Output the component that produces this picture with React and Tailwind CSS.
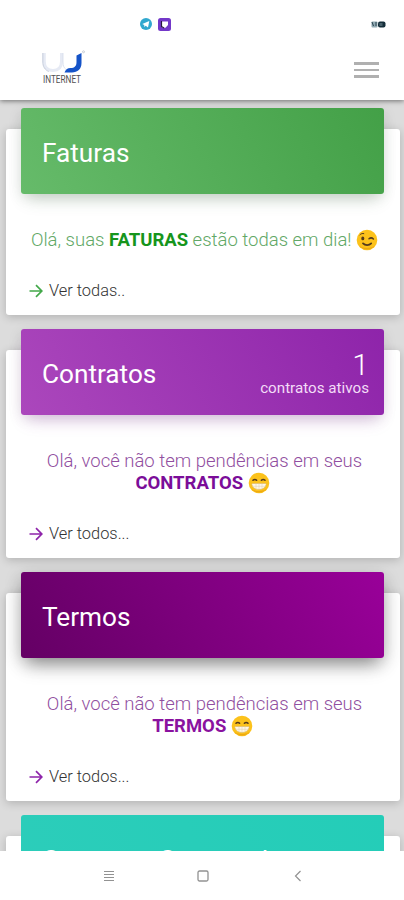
import React from 'react';

const cards = [
    {
        title: 'Faturas',
        titleSpacing: 'pt-[4px]',
        header: 'bg-[linear-gradient(60deg,#66bb6a,#43a047)] shadow-[0_10px_16px_-6px_rgba(60,110,65,0.25),0_3px_14px_rgba(0,0,0,0.1)]',
        text: 'text-[#62a866]',
        strong: 'text-[#16951c]',
        arrow: 'text-[#43a84a]',
        size: 'h-[186px]',
        message: 'Olá, suas ',
        keyword: 'FATURAS',
        after: ' estão todas em dia!',
        emoji: 'wink',
        link: 'Ver todas..',
    },
    {
        title: 'Contratos',
        titleSpacing: 'pt-[4px]',
        count: '1',
        countLabel: 'contratos ativos',
        header: 'bg-[linear-gradient(60deg,#ab47bc,#8e24aa)] shadow-[0_10px_16px_-6px_rgba(140,50,165,0.28),0_3px_14px_rgba(0,0,0,0.1)]',
        text: 'text-[#914fa0]',
        strong: 'text-[#7b0d99]',
        arrow: 'text-[#8e24aa]',
        size: 'h-[208px]',
        message: 'Olá, você não tem pendências em seus',
        keyword: 'CONTRATOS',
        breakLine: true,
        emoji: 'grin',
        link: 'Ver todos...',
    },
    {
        title: 'Termos',
        titleSpacing: 'pt-[4px]',
        header: 'bg-[linear-gradient(60deg,#640064,#990099)] shadow-[0_10px_18px_-5px_rgba(0,0,0,0.42),0_4px_18px_rgba(0,0,0,0.16)]',
        text: 'text-[#914fa0]',
        strong: 'text-[#8a129f]',
        arrow: 'text-[#8e24aa]',
        size: 'h-[208px]',
        message: 'Olá, você não tem pendências em seus',
        keyword: 'TERMOS',
        breakLine: true,
        emoji: 'grin',
        link: 'Ver todos...',
    },
    {
        title: 'Consumo Conectado',
        titleSpacing: 'pt-[4px] tracking-[-0.3px]',
        header: 'bg-[linear-gradient(60deg,#2ccdba,#24cdb8)]',
        size: 'h-[186px]',
    },
];

const Emoji = ({ type }) => (
    <svg className={`inline-block w-[22px] h-[22px] -my-[2px] align-[-3px] ${type === 'grin' ? 'mr-[4px]' : ''}`} viewBox="0 0 22 22">
        <circle cx="11" cy="11" r="10.3" fill="#fcc21b" />
        <path d="M2.5 16a10.3 10.3 0 0 0 17 0c-4 4-13 4-17 0Z" fill="#eda912" />
        {type === 'wink' ? (
            <g fill="none" stroke="#543a1c" strokeWidth="1.5" strokeLinecap="round">
                <ellipse cx="6.8" cy="9.4" rx="0.8" ry="1.2" fill="#543a1c" />
                <path d="M4 5.8c1-1.2 2.4-1.6 3.8-1.2" strokeWidth="1" />
                <path d="M13 9.8c1.4-1.2 3.2-1 4.4.2" />
                <path d="M7 14.4c2.2 2.3 6 2.3 8.2 0" strokeWidth="1.8" />
            </g>
        ) : (
            <g>
                <g fill="none" stroke="#543a1c" strokeWidth="1.5" strokeLinecap="round">
                    <path d="M5 8.3c1-1.2 2.6-1.2 3.6 0" />
                    <path d="M13.4 8.3c1-1.2 2.6-1.2 3.6 0" />
                </g>
                <path d="M4.5 11.5h13c.6 0 .8.5.6 1.2-.8 3-3.6 4.8-7.1 4.8s-6.3-1.8-7.1-4.8c-.2-.7 0-1.2.6-1.2Z" fill="#fff8e8" stroke="#d9b565" strokeWidth="0.6" />
                <path d="M4.6 14.3h12.8M8 11.5v5.4M11 11.5v6M14 11.5v5.4" stroke="#dccda8" strokeWidth="0.5" />
            </g>
        )}
    </svg>
);

const Arrow = ({ className }) => (
    <svg className={`w-[14px] h-[14px] mr-[6px] ${className}`} viewBox="0 0 14 14" fill="none" stroke="currentColor" strokeWidth="1.7">
        <path d="M0.5 7h12M7 1.2 12.8 7 7 12.8" />
    </svg>
);

const Card = ({ card }) => (
    <section className={`shrink-0 mx-[6px] w-[394px] rounded-[3px] bg-white shadow-[0_2px_10px_rgba(0,0,0,0.2)] flex flex-col ${card.size}`}>
        <div className={`relative -mt-[21px] ml-[15px] w-[363px] h-[86px] shrink-0 rounded-[3px] pl-[21px] pr-[15px] flex items-center justify-between text-white ${card.header}`}>
            <h2 className={`text-[26.2px] leading-[30px] whitespace-nowrap ${card.titleSpacing}`}>{card.title}</h2>
            {card.count && (
                <div className="text-right font-light pt-[4px]">
                    <div className="text-[30px] leading-[28px]">{card.count}</div>
                    <div className="text-[15.2px] leading-[18px] font-normal text-[#f3dcf7]">{card.countLabel}</div>
                </div>
            )}
        </div>
        {card.message && (
            <>
                <p className={`mt-[35px] pl-[3px] text-center text-[18.5px] leading-[22px] font-light whitespace-nowrap ${card.text}`}>
                    {card.message}
                    {card.breakLine && <br />}
                    <b className={`font-bold ${card.strong}`}>{card.keyword}</b>
                    {card.after} <Emoji type={card.emoji} />
                </p>
                <a className="mt-auto mb-[13px] ml-[23px] flex items-center text-[16.4px] leading-[22px] font-light text-[#333]">
                    <Arrow className={card.arrow} />
                    {card.link}
                </a>
            </>
        )}
    </section>
);

const Logo = () => (
    <svg className="w-[44px] h-[38px] overflow-visible" viewBox="0 0 44 38">
        <path d="M2.300 3v8.500c0 5.500 3 9 8.700 9s8.500-3.500 8.500-9V3" fill="none" stroke="#e6eaf4" strokeWidth="3" />
        <path d="M0.800 3v9c0 4.500 2.200 8 6 9.500" fill="none" stroke="#b9c2d3" strokeWidth="0.8" />
        <path d="M21 3v9c0 4 1 6 3.500 8" fill="none" stroke="#d4dceb" strokeWidth="0.8" />
        <path d="M34.500 5.500 39.500 3V13c0 6-4 9.500-9.500 9.500h-7.500c1.200-3.200 3.200-4.500 6-4.500 4 0 6-2 6-6Z" fill="#1553c8" />
        <circle cx="41.500" cy="1.800" r="1" fill="none" stroke="#a9b2bd" strokeWidth="0.6" />
        <text x="1" y="32.500" fontSize="10" textLength="38" lengthAdjust="spacingAndGlyphs" fill="#505050" fontFamily="Roboto, sans-serif">INTERNET</text>
    </svg>
);

const StatusBar = () => (
    <div className="h-[48px] shrink-0 flex items-center pl-[140px] pr-[18px]">
        <svg className="w-[12px] h-[12px]" viewBox="0 0 12 12">
            <circle cx="6" cy="6" r="6" fill="#31a8cf" />
            <path d="m2.300 5.900 7-3-1.300 6.500-2.300-1.700-1.300 1.200-.2-2Z" fill="#fff" />
        </svg>
        <svg className="w-[13px] h-[13px] ml-[6px]" viewBox="0 0 13 13">
            <rect width="13" height="13" rx="2.500" fill="#7338c9" />
            <path d="M4 3.500h6v3.500L7.500 9.800H4Z" fill="#fff" />
            <path d="M3.500 3v5.500l2.500 1.500" fill="none" stroke="#28183f" strokeWidth="1.200" />
        </svg>
        <svg className="w-[15px] h-[7px] ml-auto" viewBox="0 0 15 7">
            <rect x="0.500" y="0.500" width="6" height="6" rx="1" fill="#91aab3" />
            <path d="M1 1l1.500 4M5 1v4" stroke="#29434f" strokeWidth="1" />
            <rect x="7" y="0.500" width="7.500" height="6" rx="2" fill="#142e3a" />
            <rect x="8.500" y="2" width="3" height="3" fill="#48616c" />
        </svg>
    </div>
);

const NavBar = () => (
    <nav className="relative z-10 h-[49px] shrink-0 bg-white flex items-start pt-[19px] pl-[103px] text-[#929292]">
        <svg className="w-[12px] h-[12px]" viewBox="0 0 12 12" stroke="currentColor" strokeWidth="1">
            <path d="M1 1.500h10M1 4.500h10M1 7.500h10M1 10.500h10" />
        </svg>
        <svg className="w-[12px] h-[12px] ml-[82px]" viewBox="0 0 12 12" fill="none" stroke="currentColor" strokeWidth="1.300">
            <rect x="1" y="1" width="10" height="10" rx="1.500" />
        </svg>
        <svg className="w-[8px] h-[12px] ml-[85px]" viewBox="0 0 8 12" fill="none" stroke="currentColor" strokeWidth="1.200">
            <path d="M6.500 1 1.500 6l5 5" />
        </svg>
    </nav>
);

const App = () => {
    return (
        <div className="w-[404px] h-[900px] overflow-hidden flex flex-col bg-[#dcdcdc] font-[Roboto,sans-serif]">
            <header className="relative z-10 h-[100px] shrink-0 bg-white flex flex-col shadow-[0_1px_5px_rgba(0,0,0,0.5)]">
                <StatusBar />
                <div className="flex items-start justify-between pl-[42px] pr-[25px] pt-[2px]">
                    <Logo />
                    <button className="mt-[12px] flex flex-col gap-[4px]" aria-label="Menu">
                        <span className="block w-[25px] h-[2.5px] bg-[#b0b0b0]" />
                        <span className="block w-[25px] h-[2.5px] bg-[#b0b0b0]" />
                        <span className="block w-[25px] h-[2.5px] bg-[#b0b0b0]" />
                    </button>
                </div>
            </header>

            <main className="flex-1 min-h-0 overflow-hidden flex flex-col gap-[35px] pt-[29px]">
                {cards.map(card => (
                    <Card key={card.title} card={card} />
                ))}
            </main>

            <NavBar />
        </div>
    );
};

export default App;
